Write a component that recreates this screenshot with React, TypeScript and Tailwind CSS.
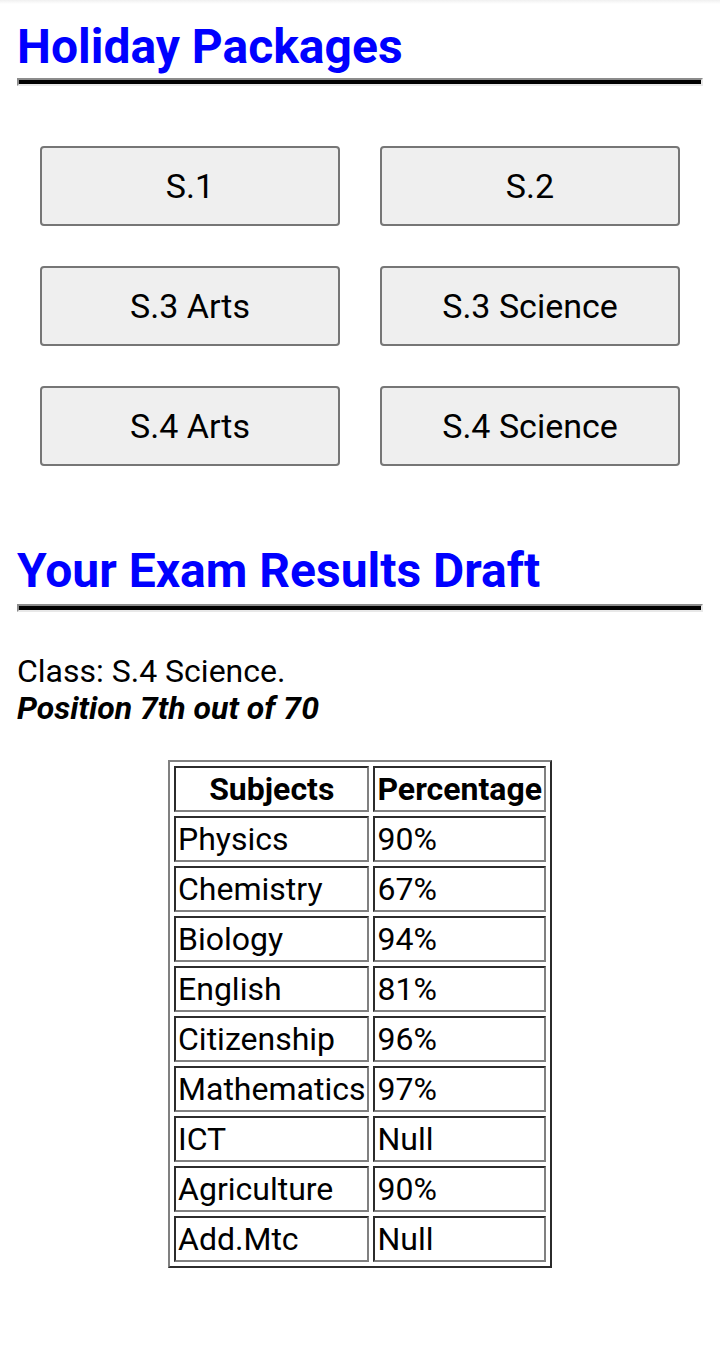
import React from 'react';

const packages = ['S.1', 'S.2', 'S.3 Arts', 'S.3 Science', 'S.4 Arts', 'S.4 Science'];

const results: [string, string][] = [
    ['Physics', '90%'],
    ['Chemistry', '67%'],
    ['Biology', '94%'],
    ['English', '81%'],
    ['Citizenship', '96%'],
    ['Mathematics', '97%'],
    ['ICT', 'Null'],
    ['Agriculture', '90%'],
    ['Add.Mtc', 'Null'],
];

function Rule() {
    // old-school <hr> look: gray top/left, black body, light bottom/right
    return (
        <div className="h-[8px] bg-black border-t-2 border-l-2 border-t-[#8c8c8c] border-l-[#8c8c8c] border-b-2 border-r-2 border-b-[#e8e8e8] border-r-[#e8e8e8]" />
    );
}

function Cell({ children, head }: { children: React.ReactNode; head?: boolean }) {
    return (
        <td
            className={`h-[46px] px-[2px] py-0 border-2 border-t-[#2b2b2b] border-l-[#2b2b2b] border-b-[#808080] border-r-[#808080] leading-none ${head ? 'font-bold text-center' : 'text-left'}`}
        >
            {children}
        </td>
    );
}

export default function App() {
    return (
        <div className="min-h-[1346px] bg-white text-black font-['Roboto',sans-serif] relative">
            <div className="h-[4px] bg-gradient-to-b from-[#f0f0f0] to-white" />
            <div className="px-[17px]">
                <h1 className="text-[48px] font-bold text-[#0000ff] leading-[52px] mt-[17px]">Holiday Packages</h1>
                <div className="mt-[5px]">
                    <Rule />
                </div>

                <div className="grid grid-cols-[300px_300px] justify-center gap-x-[40px] gap-y-[40px] mt-[60px]">
                    {packages.map((p) => (
                        <button
                            key={p}
                            className="h-[80px] bg-[#efefef] border-2 border-[#767676] rounded-[4px] text-[34px] text-black"
                        >
                            {p}
                        </button>
                    ))}
                </div>

                <h1 className="text-[48px] font-bold text-[#0000ff] leading-[52px] mt-[79px]">Your Exam Results Draft</h1>
                <div className="mt-[7px]">
                    <Rule />
                </div>

                <p className="text-[32px] leading-[37px] mt-[41px]">Class: S.4 Science.</p>
                <p className="text-[32px] leading-[37px] font-bold italic">Position 7th out of 70</p>

                <div className="flex justify-center mt-[33px]">
                    <table className="border-separate border-spacing-[4px] border-2 border-t-[#808080] border-l-[#808080] border-b-[#2b2b2b] border-r-[#2b2b2b] text-[32px]">
                        <thead>
                            <tr>
                                <Cell head>Subjects</Cell>
                                <Cell head>Percentage</Cell>
                            </tr>
                        </thead>
                        <tbody>
                            {results.map(([s, p]) => (
                                <tr key={s}>
                                    <Cell>{s}</Cell>
                                    <Cell>{p}</Cell>
                                </tr>
                            ))}
                        </tbody>
                    </table>
                </div>
            </div>
        </div>
    );
}
